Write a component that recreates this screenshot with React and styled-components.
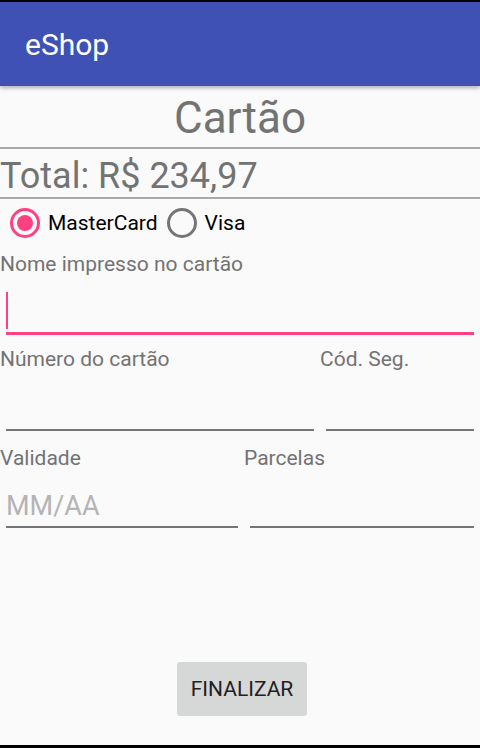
import React from "react";
import styled, {createGlobalStyle} from "styled-components";

const GlobalStyle = createGlobalStyle`
  body {
    margin: 0;
    background: #fafafa;
    font-family: Roboto, "Liberation Sans", sans-serif;
  }
`
const Screen = styled.div`
  width: 480px;
  height: 748px;
  display: flex;
  flex-direction: column;
  background: #fafafa;
  overflow: hidden;
`
const StatusStrip = styled.div`
  height: 2px;
  background: #000;
`
const AppBar = styled.div`
  height: 84px;
  display: flex;
  align-items: center;
  padding-left: 25px;
  background: #3f51b5;
  color: #fff;
  font-size: 30px;
  box-shadow: 0 2px 4px rgba(0, 0, 0, 0.3);
  position: relative;
  z-index: 1;
`
const Title = styled.div`
  margin-top: 6px;
  font-size: 44px;
  line-height: 52px;
  color: #737373;
  text-align: center;
`
const Divider = styled.div`
  height: 2px;
  background: #a8a8a8;
  margin-top: ${p => p.$top || 0}px;
`
const Total = styled.div`
  margin-top: 6px;
  font-size: 36px;
  line-height: 42px;
  color: #737373;
`
const RadioGroup = styled.div`
  display: flex;
  align-items: center;
  margin-top: 9px;
  padding-left: 10px;
  height: 30px;
`
const RadioOption = styled.label`
  display: flex;
  align-items: center;
  gap: 8px;
  margin-right: 9px;
  font-size: 21px;
  line-height: 30px;
  color: #000;
`
const RadioCircle = styled.span`
  box-sizing: border-box;
  width: 30px;
  height: 30px;
  border-radius: 50%;
  border: 3px solid ${p => p.$checked ? "#ff4081" : "#757575"};
  display: flex;
  align-items: center;
  justify-content: center;
  &::after {
    content: "";
    width: 16px;
    height: 16px;
    border-radius: 50%;
    background: #ff4081;
    display: ${p => p.$checked ? "block" : "none"};
  }
`
const Label = styled.div`
  font-size: 21px;
  line-height: 25px;
  color: #737373;
  margin-top: ${p => p.$top || 0}px;
  white-space: nowrap;
`
const Field = styled.div`
  box-sizing: border-box;
  height: ${p => p.$height}px;
  margin: 0 6px;
  display: flex;
  align-items: flex-end;
  border-bottom: ${p => p.$focused ? "3px solid #ff4081" : "2px solid #757575"};
`
const Caret = styled.span`
  width: 2px;
  height: 37px;
  margin-bottom: 3px;
  background: #ff4081;
`
const Hint = styled.span`
  font-size: 27px;
  line-height: 32px;
  padding-bottom: 4px;
  color: #b4b4b4;
`
const Row = styled.div`
  display: grid;
  grid-template-columns: ${p => p.$cols};
  margin-top: ${p => p.$top}px;
`
const Footer = styled.div`
  margin-top: auto;
  margin-bottom: 29px;
  display: flex;
  justify-content: center;
  padding-left: 4px;
`
const Button = styled.button`
  width: 130px;
  height: 54px;
  border: none;
  border-radius: 3px;
  background: #d6d7d7;
  color: #212121;
  font-family: Roboto, "Liberation Sans", sans-serif;
  font-size: 21px;
  padding: 0;
`
const NavStrip = styled.div`
  height: 3px;
  background: #000;
`

const App = () => {
    return (
        <Screen>
            <GlobalStyle/>
            <StatusStrip/>
            <AppBar>eShop</AppBar>
            <Title>Cartão</Title>
            <Divider $top={3}/>
            <Total>Total: R$ 234,97</Total>
            <Divider/>
            <RadioGroup>
                <RadioOption>
                    <RadioCircle $checked/>
                    MasterCard
                </RadioOption>
                <RadioOption>
                    <RadioCircle/>
                    Visa
                </RadioOption>
            </RadioGroup>
            <Label $top={14}>Nome impresso no cartão</Label>
            <Field $height={58} $focused>
                <Caret/>
            </Field>
            <Row $cols="320px 1fr" $top={12}>
                <div>
                    <Label>Número do cartão</Label>
                    <Field $height={59}/>
                </div>
                <div>
                    <Label>Cód. Seg.</Label>
                    <Field $height={59}/>
                </div>
            </Row>
            <Row $cols="244px 1fr" $top={15}>
                <div>
                    <Label>Validade</Label>
                    <Field $height={57}>
                        <Hint>MM/AA</Hint>
                    </Field>
                </div>
                <div>
                    <Label>Parcelas</Label>
                    <Field $height={57}/>
                </div>
            </Row>
            <Footer>
                <Button>FINALIZAR</Button>
            </Footer>
            <NavStrip/>
        </Screen>
    )
}
export default App;
